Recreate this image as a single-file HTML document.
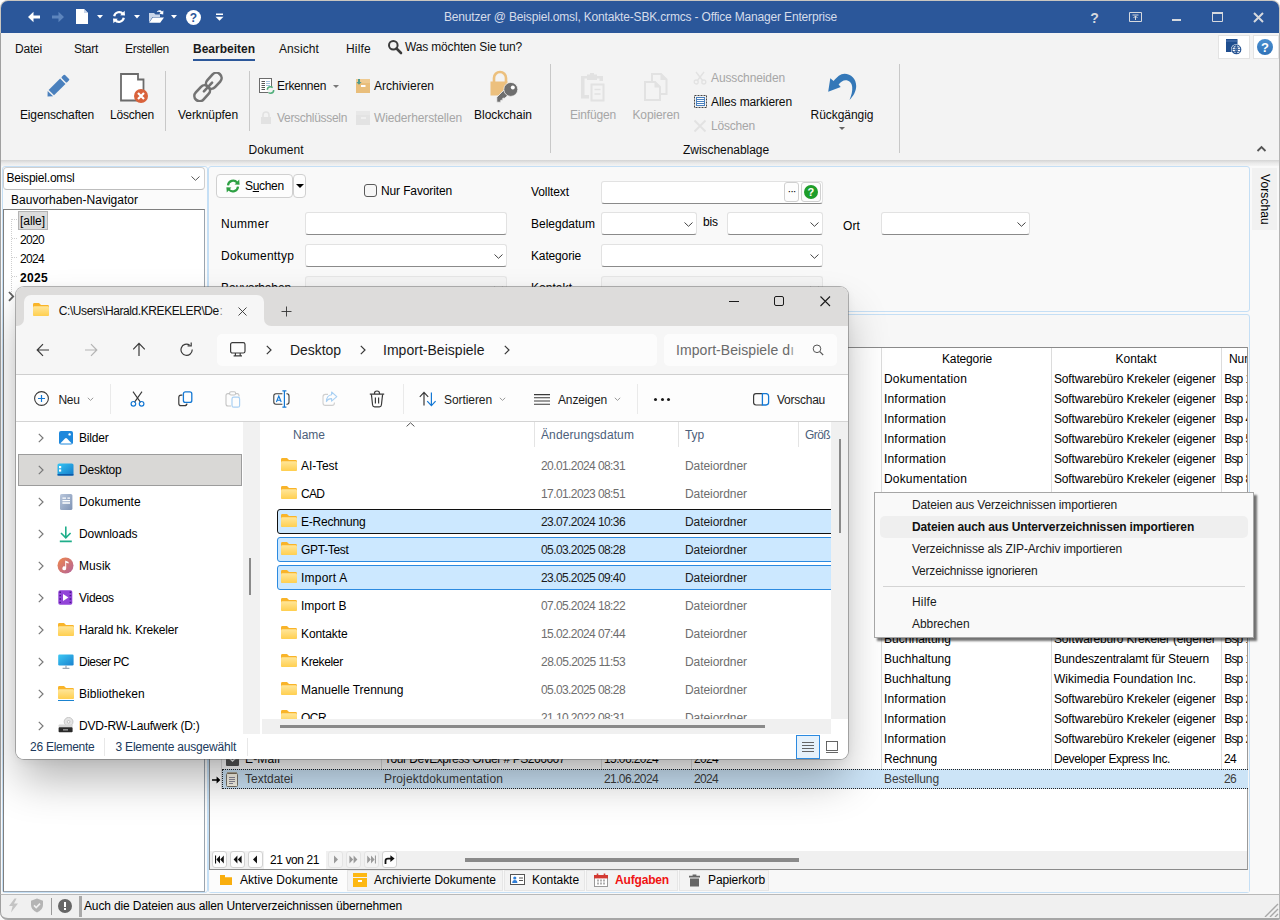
<!DOCTYPE html>
<html lang="de"><head><meta charset="utf-8"><title>Office Manager Enterprise</title>
<style>
html,body{margin:0;padding:0;}
body{width:1280px;height:920px;overflow:hidden;position:relative;background:#f9f9f9;font-family:"Liberation Sans",sans-serif;font-size:12px;color:#000;}
div,span,svg{position:absolute;box-sizing:border-box;}
.t{white-space:nowrap;display:block;}
.g{color:#a6a6a6;}

</style></head><body>
<div style="left:0px;top:0px;width:1280px;height:920px;background:#f9f9f9;border-radius:8px 8px 2px 8px;"></div>
<div style="left:0px;top:0px;width:1280px;height:34px;background:#fff;"></div>
<div style="left:0px;top:0px;width:1280px;height:34px;background:#c9c6c0;border-radius:8px 8px 0 0;"></div>
<div style="left:1px;top:1px;width:1278px;height:32px;background:#2b579a;border-radius:7px 7px 0 0;"></div>
<svg style="left:26px;top:9px;" width="16" height="16" viewBox="0 0 16 16"><path d="M2 8 L7.5 2.8 V6.6 H14 V9.4 H7.5 V13.2 Z" fill="#ffffff"/></svg>
<svg style="left:50px;top:9px;" width="16" height="16" viewBox="0 0 16 16"><path d="M14 8 L8.5 2.8 V6.6 H2 V9.4 H8.5 V13.2 Z" fill="#5d85bd"/></svg>
<svg style="left:75px;top:8px;" width="14" height="17" viewBox="0 0 14 17"><path d="M1 1 H9 L13 5 V16 H1 Z" fill="#ffffff"/><path d="M9 1 V5 H13 Z" fill="#c9d6ea"/></svg>
<svg style="left:96.5px;top:15px;" width="6" height="4" viewBox="0 0 6 4"><path d="M0 0 H6 L3 3.4 Z" fill="#ffffff"/></svg>
<svg style="left:133.5px;top:15px;" width="6" height="4" viewBox="0 0 6 4"><path d="M0 0 H6 L3 3.4 Z" fill="#ffffff"/></svg>
<svg style="left:170.5px;top:15px;" width="6" height="4" viewBox="0 0 6 4"><path d="M0 0 H6 L3 3.4 Z" fill="#ffffff"/></svg>
<svg style="left:112px;top:10px;" width="14" height="14" viewBox="0 0 14 14"><path d="M2.2 6.2 A5 5 0 0 1 11 4" fill="none" stroke="#ffffff" stroke-width="2.2"/><path d="M8.2 5.2 L13 5.6 L12.6 0.8 Z" fill="#ffffff"/><path d="M11.8 7.8 A5 5 0 0 1 3 10" fill="none" stroke="#ffffff" stroke-width="2.2"/><path d="M5.8 8.8 L1 8.4 L1.4 13.2 Z" fill="#ffffff"/></svg>
<svg style="left:148px;top:8px;" width="17" height="16" viewBox="0 0 17 16"><path d="M1 5 H6 L7.5 6.5 H12 V9 H4.5 L1 14.5 Z" fill="#c9d6ea"/><path d="M4.8 9.6 H16 L12.2 14.8 H1.2 Z" fill="#ffffff"/><path d="M9 3.4 C11 1.6 13 2 14 3.6 L15.4 2.6 L15.2 6.6 L11.4 5.8 L12.6 4.8 C11.8 3.6 10.6 3.4 9.6 4.2 Z" fill="#ffffff"/></svg>
<div style="left:186px;top:10px;width:15px;height:15px;background:#ffffff;border-radius:50%;"></div>
<span class="t" style="left:189.8px;top:9.5px;line-height:16px;letter-spacing:0px;font-weight:bold;color:#2b579a;">?</span>
<svg style="left:215px;top:13px;" width="9" height="8" viewBox="0 0 9 8"><path d="M1 0.5 H8 V2 H1 Z M0.5 3.8 H8.5 L4.5 7.8 Z" fill="#ffffff"/></svg>
<span class="t" style="left:444.0px;top:9.0px;line-height:16px;letter-spacing:-0.172px;color:#d5dcea;">Benutzer @ Beispiel.omsl, Kontakte-SBK.crmcs - Office Manager Enterprise</span>
<span class="t" style="left:1090.2px;top:8.5px;line-height:18px;letter-spacing:0px;font-size:14px;font-weight:bold;color:#d6d9de;">?</span>
<svg style="left:1129px;top:12px;" width="13" height="10" viewBox="0 0 13 10"><path d="M0.5 0.5 H12.5 V9.5 H0.5 Z" fill="none" stroke="#d6d9de" stroke-width="1"/><path d="M3.5 3 H9.5 M6.5 8 V4 M4.5 6 L6.5 4 L8.5 6" fill="none" stroke="#d6d9de" stroke-width="1"/></svg>
<div style="left:1172px;top:19px;width:9px;height:2px;background:#d6d9de;"></div>
<svg style="left:1212px;top:12px;" width="11" height="10" viewBox="0 0 11 10"><path d="M0.5 1 H10.5 V9.5 H0.5 Z" fill="none" stroke="#d6d9de" stroke-width="1"/><path d="M0 0 H11 V2 H0 Z" fill="#d6d9de"/></svg>
<svg style="left:1253px;top:12px;" width="11" height="11" viewBox="0 0 11 11"><path d="M1 1 L10 10 M10 1 L1 10" stroke="#d6d9de" stroke-width="2" fill="none"/></svg>
<div style="left:1px;top:33px;width:1279px;height:128px;background:#f3f3f3;"></div>
<div style="left:1px;top:160px;width:1279px;height:6px;background:linear-gradient(#d4d4d4,#e9e9e9 50%,#f4f4f4);"></div>
<div style="left:0px;top:33px;width:1px;height:879px;background:#a0a0a0;"></div>
<div style="left:1279px;top:33px;width:1px;height:879px;background:#b4b4b4;"></div>
<span class="t" style="left:15.0px;top:40.5px;line-height:16px;letter-spacing:-0.203px;color:#111;">Datei</span>
<span class="t" style="left:74.0px;top:40.5px;line-height:16px;letter-spacing:-0.266px;color:#111;">Start</span>
<span class="t" style="left:125.0px;top:40.5px;line-height:16px;letter-spacing:-0.299px;color:#111;">Erstellen</span>
<span class="t" style="left:279.0px;top:40.5px;line-height:16px;letter-spacing:0.094px;color:#111;">Ansicht</span>
<span class="t" style="left:346.0px;top:40.5px;line-height:16px;letter-spacing:0.197px;color:#111;">Hilfe</span>
<span class="t" style="left:193.0px;top:40.5px;line-height:16px;letter-spacing:-0.002px;font-weight:bold;color:#1a1a1a;">Bearbeiten</span>
<div style="left:193px;top:59px;width:62px;height:2px;background:#2b579a;"></div>
<svg style="left:387px;top:39px;" width="16" height="16" viewBox="0 0 16 16"><circle cx="6.3" cy="6.3" r="4.3" fill="none" stroke="#3b3b3b" stroke-width="2"/><path d="M9.5 9.5 L14 14" stroke="#3b3b3b" stroke-width="2.6" stroke-linecap="round"/></svg>
<span class="t" style="left:405.0px;top:38.5px;line-height:16px;letter-spacing:-0.163px;color:#111;">Was möchten Sie tun?</span>
<div style="left:1218px;top:35px;width:32px;height:24px;background:#fff;border:1px solid #e3e3e3;"></div>
<div style="left:1253px;top:35px;width:26px;height:24px;background:#fff;border:1px solid #e3e3e3;"></div>
<svg style="left:1226px;top:39px;" width="17" height="17" viewBox="0 0 17 17"><rect x="0" y="0" width="11.5" height="13" fill="#1f4e8f"/><rect x="0" y="1.6" width="11.5" height="0.8" fill="#5f86bd"/><circle cx="10.4" cy="10.4" r="5.4" fill="#fff"/><circle cx="10.4" cy="10.4" r="4.4" fill="#fff" stroke="#1f4e8f" stroke-width="1.1"/><path d="M6 10.4 H14.8 M10.4 6 V14.8 M7 8.2 H13.8 M7 12.6 H13.8 M10.4 6 Q7.6 10.4 10.4 14.8 M10.4 6 Q13.2 10.4 10.4 14.8" fill="none" stroke="#1f4e8f" stroke-width="0.8"/></svg>
<div style="left:1257px;top:39px;width:16px;height:16px;background:linear-gradient(#4a8fd0,#2f72b8);border-radius:50%;"></div>
<span class="t" style="left:1261.0px;top:39.0px;line-height:17px;letter-spacing:0px;font-size:13px;font-weight:bold;color:#fff;">?</span>
<div style="left:165px;top:71px;width:1px;height:60px;background:#c8c8c8;"></div>
<div style="left:249px;top:71px;width:1px;height:60px;background:#c8c8c8;"></div>
<div style="left:550px;top:64px;width:1px;height:89px;background:#c8c8c8;"></div>
<div style="left:899px;top:64px;width:1px;height:89px;background:#c8c8c8;"></div>
<span class="t" style="left:20.0px;top:107.0px;line-height:16px;letter-spacing:-0.156px;color:#0c0c0c;">Eigenschaften</span>
<span class="t" style="left:110.0px;top:107.0px;line-height:16px;letter-spacing:-0.194px;color:#0c0c0c;">Löschen</span>
<span class="t" style="left:178.0px;top:107.0px;line-height:16px;letter-spacing:-0.070px;color:#0c0c0c;">Verknüpfen</span>
<span class="t" style="left:474.0px;top:107.0px;line-height:16px;letter-spacing:-0.003px;color:#0c0c0c;">Blockchain</span>
<span class="t g" style="left:570.0px;top:107.0px;line-height:16px;letter-spacing:-0.170px;">Einfügen</span>
<span class="t g" style="left:632.5px;top:107.0px;line-height:16px;letter-spacing:-0.129px;">Kopieren</span>
<span class="t" style="left:810.5px;top:107.0px;line-height:16px;letter-spacing:-0.037px;color:#0c0c0c;">Rückgängig</span>
<svg style="left:839px;top:127px;" width="6" height="3" viewBox="0 0 6 3"><path d="M0 0 H6 L3 3 Z" fill="#666"/></svg>
<span class="t" style="left:248.5px;top:142.0px;line-height:16px;letter-spacing:0.039px;color:#0c0c0c;">Dokument</span>
<span class="t" style="left:683.0px;top:142.0px;line-height:16px;letter-spacing:-0.051px;color:#0c0c0c;">Zwischenablage</span>
<span class="t" style="left:277.0px;top:78.0px;line-height:16px;letter-spacing:-0.295px;color:#0c0c0c;">Erkennen</span>
<svg style="left:333px;top:85px;" width="6" height="3" viewBox="0 0 6 3"><path d="M0 0 H6 L3 3 Z" fill="#777"/></svg>
<span class="t" style="left:374.0px;top:78.0px;line-height:16px;letter-spacing:-0.003px;color:#0c0c0c;">Archivieren</span>
<span class="t g" style="left:277.0px;top:110.0px;line-height:16px;letter-spacing:-0.311px;">Verschlüsseln</span>
<span class="t g" style="left:374.0px;top:110.0px;line-height:16px;letter-spacing:-0.128px;">Wiederherstellen</span>
<span class="t g" style="left:711.0px;top:70.0px;line-height:16px;letter-spacing:-0.115px;">Ausschneiden</span>
<span class="t" style="left:711.0px;top:94.0px;line-height:16px;letter-spacing:-0.114px;color:#0c0c0c;">Alles markieren</span>
<span class="t g" style="left:711.0px;top:118.0px;line-height:16px;letter-spacing:-0.194px;">Löschen</span>
<svg style="left:1256px;top:145px;" width="11" height="8" viewBox="0 0 11 8"><path d="M1.5 6 L5.5 2 L9.5 6" fill="none" stroke="#555" stroke-width="1.8"/></svg>
<svg style="left:44px;top:74px;" width="26" height="26" viewBox="0 0 26 26"><g transform="rotate(45 13 13)"><rect x="9.2" y="-1.2" width="7.6" height="4.6" rx="1" fill="#4a80bd"/><rect x="9.2" y="4.8" width="7.6" height="16.2" fill="#4a80bd"/><path d="M9.2 22.4 H16.8 L13 26.4 Z" fill="#4a80bd"/></g></svg>
<svg style="left:119px;top:72px;" width="30" height="32" viewBox="0 0 30 32"><path d="M2 2 H19 V7.5 H24.5 V28.5 H2 Z" fill="#fff" stroke="#6b6b6b" stroke-width="1.8"/><circle cx="22" cy="24" r="7" fill="#d9623b"/><path d="M19 21 L25 27 M25 21 L19 27" stroke="#fff" stroke-width="2.2"/></svg>
<svg style="left:193px;top:72px;" width="30" height="30" viewBox="0 0 30 30"><g fill="none" stroke="#737373" stroke-width="2.6" transform="rotate(-47 15 15)"><rect x="-2.5" y="9.8" width="18" height="10.4" rx="5.2"/><rect x="14.5" y="9.8" width="18" height="10.4" rx="5.2"/><path d="M9 15 H21" stroke-linecap="round"/></g></svg>
<svg style="left:258px;top:77px;" width="17" height="18" viewBox="0 0 17 18"><rect x="1.5" y="1.5" width="12" height="14" fill="#fff" stroke="#6b6b6b" stroke-width="1"/><path d="M3.5 4.5 H7 M3.5 6.5 H7 M3.5 8.5 H7 M3.5 10.5 H7 M3.5 12.5 H7" stroke="#555" stroke-width="1"/><path d="M8.5 4.5 H12 M8.5 6.5 H12 M8.5 8.5 H12" stroke="#4a80bd" stroke-width="1" stroke-dasharray="1 1"/><circle cx="12.5" cy="13" r="3.2" fill="#f3f3f3" stroke="#4fae7a" stroke-width="1.5" stroke-dasharray="7 3"/></svg>
<svg style="left:260px;top:111px;" width="12" height="14" viewBox="0 0 12 14"><path d="M3 6 V4 A3 3 0 0 1 9 4 V6" fill="none" stroke="#e2e2e2" stroke-width="1.6"/><rect x="1" y="6" width="10" height="7" fill="#e2e2e2"/></svg>
<svg style="left:356px;top:79px;" width="14" height="14" viewBox="0 0 14 14"><rect x="0" y="0" width="14" height="4" fill="#efca90"/><rect x="0" y="4" width="14" height="10" fill="#e9be7b"/><rect x="5" y="6" width="4.5" height="2" fill="#fff"/><path d="M2 0 H4 V3 H5.6 L3 5.8 L0.4 3 H2 Z" fill="#4f9a8c"/></svg>
<svg style="left:356px;top:111px;" width="14" height="14" viewBox="0 0 14 14"><rect x="0" y="0" width="14" height="4" fill="#e8e8e8"/><rect x="0" y="4" width="14" height="10" fill="#e3e3e3"/><rect x="5" y="6" width="4.5" height="2" fill="#fff"/></svg>
<div style="left:361px;top:117px;width:4.5px;height:2px;background:#efefef;"></div>
<svg style="left:488px;top:69px;" width="32" height="36" viewBox="0 0 32 36"><path d="M6 13 V9 A6 6 0 0 1 18 9 V13" fill="none" stroke="#ecc07e" stroke-width="2.6"/><rect x="2.5" y="12.5" width="17" height="14" fill="#ecc07e"/><path d="M18 19 L8.8 28.2 V33.2 H12.8 V31.2 H14.8 V29.2 H16.8 L20.8 25.6 Z" fill="#6e6e6e" stroke="#f3f3f3" stroke-width="0.8"/><circle cx="22.8" cy="20.4" r="7" fill="#6e6e6e" stroke="#f3f3f3" stroke-width="0.8"/><circle cx="24.8" cy="18.4" r="2" fill="#fff"/></svg>
<svg style="left:580px;top:72px;" width="26" height="30" viewBox="0 0 26 30"><path d="M1 4 H7 V2.5 H10 V1 H14 V2.5 H17 V4 H23 V9 H19.5 V6.5 H17 V8 H7 V6.5 H4.5 V23 H9 V26.5 H1 Z" fill="#e2e2e2"/><path d="M11.5 12.5 H23.5 V28.5 H11.5 Z" fill="none" stroke="#e2e2e2" stroke-width="2"/><path d="M14.5 17.5 H20.5 M14.5 22 H20.5" stroke="#e2e2e2" stroke-width="1.6"/></svg>
<svg style="left:643px;top:72px;" width="26" height="30" viewBox="0 0 26 30"><path d="M9 10 V2 H18 L23.5 7.5 V22 H18" fill="none" stroke="#e2e2e2" stroke-width="2"/><path d="M17.5 2 V8 H23.5 Z" fill="#e2e2e2"/><path d="M2 10 H12 L17 15 V28 H2 Z" fill="none" stroke="#e2e2e2" stroke-width="2"/><path d="M11.5 10 V15.5 H17 Z" fill="#e2e2e2"/></svg>
<svg style="left:693px;top:71px;" width="14" height="14" viewBox="0 0 14 14"><path d="M3 1 L10 10 M11 1 L4 10" stroke="#e2e2e2" stroke-width="1.4" fill="none"/><circle cx="3.2" cy="11" r="2" fill="none" stroke="#e2e2e2" stroke-width="1.3"/><circle cx="10.8" cy="11" r="2" fill="none" stroke="#e2e2e2" stroke-width="1.3"/></svg>
<svg style="left:693px;top:94px;" width="15" height="15" viewBox="0 0 15 15"><rect x="1.5" y="1.5" width="12" height="12" fill="none" stroke="#444" stroke-width="1" stroke-dasharray="2 1"/><rect x="3.5" y="3.5" width="8" height="8" fill="#fff" stroke="#4a80bd" stroke-width="1"/><path d="M4 5.5 H11 M4 7.5 H11 M4 9.5 H11" stroke="#4a80bd" stroke-width="1"/></svg>
<svg style="left:693px;top:119px;" width="14" height="14" viewBox="0 0 14 14"><path d="M1.5 1.5 L12.5 12.5 M12.5 1.5 L1.5 12.5" stroke="#e2e2e2" stroke-width="1.8" fill="none"/></svg>
<svg style="left:826px;top:72px;" width="32" height="30" viewBox="0 0 32 30"><path d="M2.2 19.8 L4.3 6.3 L7.6 9 C11 5 14.5 1.8 18.5 1.8 C25 1.8 30.2 7 30.2 14 C30.2 19 27.5 24 23.5 28 C25.5 23 26.6 19 26.2 15 C25.8 10.5 23 8.2 19.5 8.2 C17 8.2 14.8 10 12.6 12.4 L14.7 14.9 Z" fill="#3478b8"/></svg>
<div style="left:2px;top:166px;width:206px;height:727px;border:1px solid #c5dff5;border-radius:3px;background:#fbfbfb;"></div>
<div style="left:208px;top:166px;width:1042px;height:146px;border:1px solid #c5dff5;border-radius:3px;background:#f9f9f9;"></div>
<div style="left:208px;top:314px;width:1042px;height:579px;border:1px solid #c5dff5;border-radius:3px;background:#f7f7f7;"></div>
<div style="left:3px;top:167px;width:202px;height:23px;background:#fff;border:1px solid #cfcfcf;border-bottom-color:#bdbdbd;border-radius:4px;"></div>
<span class="t" style="left:6.4px;top:170.0px;line-height:16px;letter-spacing:-0.208px;">Beispiel.omsl</span>
<svg style="left:191px;top:176px;" width="9" height="5" viewBox="0 0 9 5"><path d="M0.5 0.5 L4.5 4.3 L8.5 0.5" fill="none" stroke="#555" stroke-width="1.0"/></svg>
<span class="t" style="left:11.0px;top:192.0px;line-height:16px;letter-spacing:0.013px;">Bauvorhaben-Navigator</span>
<div style="left:3px;top:209px;width:202px;height:683px;background:#fff;border:1px solid #7f7f7f;border-right-color:#9aa4ae;border-bottom-color:#9aa4ae;"></div>
<div style="left:11px;top:219px;width:1px;height:75px;border-left:1px dotted #cfcfcf;"></div>
<div style="left:12px;top:219px;width:5px;height:1px;border-top:1px dotted #cfcfcf;"></div>
<div style="left:12px;top:238px;width:5px;height:1px;border-top:1px dotted #cfcfcf;"></div>
<div style="left:12px;top:257px;width:5px;height:1px;border-top:1px dotted #cfcfcf;"></div>
<div style="left:12px;top:276px;width:5px;height:1px;border-top:1px dotted #cfcfcf;"></div>
<div style="left:18px;top:211px;width:30px;height:19px;background:#dcdcdc;border:1px solid #b4b4b4;"></div>
<span class="t" style="left:20.0px;top:212.6px;line-height:16px;letter-spacing:-0.057px;">[alle]</span>
<span class="t" style="left:20.0px;top:232.0px;line-height:16px;letter-spacing:-0.672px;">2020</span>
<span class="t" style="left:20.0px;top:251.0px;line-height:16px;letter-spacing:-0.672px;">2024</span>
<span class="t" style="left:20.0px;top:270.0px;line-height:16px;letter-spacing:0.328px;font-weight:bold;">2025</span>
<div style="left:216px;top:174px;width:77px;height:24px;background:#fdfdfd;border:1px solid #d0d0d0;border-radius:4px;"></div>
<div style="left:293px;top:174px;width:13px;height:24px;background:#fdfdfd;border:1px solid #d0d0d0;border-radius:4px;"></div>
<svg style="left:226px;top:179px;" width="14" height="14" viewBox="0 0 14 14"><path d="M2 6.4 A5.2 5.2 0 0 1 11.2 3.6" fill="none" stroke="#2ea043" stroke-width="2.2"/><path d="M8.6 5.4 L13.6 5.8 L13.2 0.6 Z" fill="#2ea043"/><path d="M12 7.6 A5.2 5.2 0 0 1 2.8 10.4" fill="none" stroke="#2ea043" stroke-width="2.2"/><path d="M5.4 8.6 L0.4 8.2 L0.8 13.4 Z" fill="#2ea043"/></svg>
<span class="t" style="left:245.0px;top:178.0px;line-height:16px;letter-spacing:-0.331px;">S<u>u</u>chen</span>
<svg style="left:296px;top:184px;" width="8" height="4" viewBox="0 0 8 4"><path d="M0 0 H8 L4 4 Z" fill="#000"/></svg>
<div style="left:364px;top:184px;width:13px;height:13px;background:#f6f6f6;border:1px solid #5a5a5a;border-radius:3px;"></div>
<span class="t" style="left:381.0px;top:183.0px;line-height:16px;letter-spacing:-0.130px;">Nur Favoriten</span>
<span class="t" style="left:221.0px;top:216.0px;line-height:16px;letter-spacing:0.331px;">Nummer</span>
<div style="left:305px;top:212px;width:202px;height:23px;background:#fff;border:1px solid #e2e2e2;border-bottom:1px solid #8a8a8a;border-radius:3px;"></div>
<span class="t" style="left:221.0px;top:248.0px;line-height:16px;letter-spacing:0.210px;">Dokumenttyp</span>
<div style="left:305px;top:244px;width:202px;height:23px;background:#fff;border:1px solid #e2e2e2;border-bottom:1px solid #8a8a8a;border-radius:3px;"></div>
<svg style="left:494px;top:254px;" width="9" height="5" viewBox="0 0 9 5"><path d="M0.5 0.5 L4.5 4.3 L8.5 0.5" fill="none" stroke="#444" stroke-width="1.0"/></svg>
<span class="t" style="left:221.0px;top:280.0px;line-height:16px;letter-spacing:-0.125px;">Bauvorhaben</span>
<div style="left:305px;top:276px;width:202px;height:23px;background:#f4f4f4;border:1px solid #e6e6e6;border-bottom:1px solid #d8d8d8;border-radius:3px;"></div>
<svg style="left:494px;top:286px;" width="9" height="5" viewBox="0 0 9 5"><path d="M0.5 0.5 L4.5 4.3 L8.5 0.5" fill="none" stroke="#bbb" stroke-width="1.0"/></svg>
<span class="t" style="left:531.0px;top:184.0px;line-height:16px;letter-spacing:-0.086px;">Volltext</span>
<div style="left:601px;top:181px;width:222px;height:23px;background:#fff;border:1px solid #e2e2e2;border-bottom:1px solid #8a8a8a;border-radius:3px;"></div>
<div style="left:784px;top:182px;width:15px;height:20px;background:#fdfdfd;border:1px solid #d0d0d0;border-radius:3px;"></div>
<span class="t" style="left:787.5px;top:183.5px;line-height:15px;letter-spacing:-1px;font-size:11px;">···</span>
<div style="left:801px;top:182px;width:20px;height:20px;background:#fdfdfd;border:1px solid #d0d0d0;border-radius:3px;"></div>
<div style="left:804px;top:185px;width:14px;height:14px;background:#1e9e2a;border-radius:50%;"></div>
<span class="t" style="left:807.6px;top:185.0px;line-height:15px;letter-spacing:0px;font-size:11px;font-weight:bold;color:#fff;">?</span>
<span class="t" style="left:531.0px;top:216.0px;line-height:16px;letter-spacing:-0.003px;">Belegdatum</span>
<div style="left:601px;top:212px;width:96px;height:23px;background:#fff;border:1px solid #e2e2e2;border-bottom:1px solid #8a8a8a;border-radius:3px;"></div>
<svg style="left:684px;top:222px;" width="9" height="5" viewBox="0 0 9 5"><path d="M0.5 0.5 L4.5 4.3 L8.5 0.5" fill="none" stroke="#444" stroke-width="1.0"/></svg>
<span class="t" style="left:703.0px;top:214.0px;line-height:16px;letter-spacing:-0.115px;">bis</span>
<div style="left:727px;top:212px;width:96px;height:23px;background:#fff;border:1px solid #e2e2e2;border-bottom:1px solid #8a8a8a;border-radius:3px;"></div>
<svg style="left:810px;top:222px;" width="9" height="5" viewBox="0 0 9 5"><path d="M0.5 0.5 L4.5 4.3 L8.5 0.5" fill="none" stroke="#444" stroke-width="1.0"/></svg>
<span class="t" style="left:531.0px;top:248.0px;line-height:16px;letter-spacing:-0.151px;">Kategorie</span>
<div style="left:601px;top:244px;width:222px;height:23px;background:#fff;border:1px solid #e2e2e2;border-bottom:1px solid #8a8a8a;border-radius:3px;"></div>
<svg style="left:810px;top:254px;" width="9" height="5" viewBox="0 0 9 5"><path d="M0.5 0.5 L4.5 4.3 L8.5 0.5" fill="none" stroke="#444" stroke-width="1.0"/></svg>
<span class="t" style="left:531.0px;top:280.0px;line-height:16px;letter-spacing:0.047px;">Kontakt</span>
<div style="left:601px;top:276px;width:222px;height:23px;background:#f4f4f4;border:1px solid #e6e6e6;border-bottom:1px solid #d8d8d8;border-radius:3px;"></div>
<svg style="left:810px;top:286px;" width="9" height="5" viewBox="0 0 9 5"><path d="M0.5 0.5 L4.5 4.3 L8.5 0.5" fill="none" stroke="#bbb" stroke-width="1.0"/></svg>
<span class="t" style="left:843.0px;top:218.0px;line-height:16px;letter-spacing:0.115px;">Ort</span>
<div style="left:881px;top:212px;width:149px;height:23px;background:#fff;border:1px solid #e2e2e2;border-bottom:1px solid #8a8a8a;border-radius:3px;"></div>
<svg style="left:1017px;top:222px;" width="9" height="5" viewBox="0 0 9 5"><path d="M0.5 0.5 L4.5 4.3 L8.5 0.5" fill="none" stroke="#444" stroke-width="1.0"/></svg>
<div style="left:1252px;top:168px;width:25px;height:62px;background:#f1f1f1;"></div>
<span class="t" style="left:1257px;top:174px;writing-mode:vertical-rl;line-height:16px;letter-spacing:0.1px;">Vorschau</span>
<svg style="left:8px;top:291px;" width="7" height="11" viewBox="0 0 7 11"><path d="M1 1 L5.2 5.4 L1 9.8" fill="none" stroke="#606060" stroke-width="1.8"/></svg>
<div style="left:209px;top:347px;width:1039px;height:523px;background:#fff;border:1px solid #8a8a8a;border-right-color:#9a9a9a;"></div>
<div style="left:221px;top:348px;width:1px;height:441px;background:#dcdcdc;"></div>
<div style="left:381px;top:348px;width:1px;height:441px;background:#dcdcdc;"></div>
<div style="left:601px;top:348px;width:1px;height:441px;background:#dcdcdc;"></div>
<div style="left:691px;top:348px;width:1px;height:441px;background:#dcdcdc;"></div>
<div style="left:881px;top:348px;width:1px;height:441px;background:#dcdcdc;"></div>
<div style="left:1051px;top:348px;width:1px;height:441px;background:#dcdcdc;"></div>
<div style="left:1221px;top:348px;width:1px;height:441px;background:#dcdcdc;"></div>
<span class="t" style="left:942.0px;top:351.0px;line-height:16px;letter-spacing:-0.151px;">Kategorie</span>
<span class="t" style="left:1115.5px;top:351.0px;line-height:16px;letter-spacing:0.047px;">Kontakt</span>
<div style="left:1222px;top:348px;width:25px;height:20px;overflow:hidden;"><span class="t" style="left:7px;top:3px;line-height:16px;letter-spacing:-0.1px;">Nummer</span></div>
<div style="left:222px;top:769px;width:1026px;height:20px;background:#cce4f7;"></div>
<div style="left:223px;top:769px;width:1025px;height:1px;border-top:1px dotted #222;"></div>
<div style="left:223px;top:788px;width:1025px;height:1px;border-top:1px dotted #222;"></div>
<div style="left:222px;top:769px;width:1px;height:20px;border-left:1px dotted #222;"></div>
<span class="t" style="left:884.0px;top:371.0px;line-height:16px;letter-spacing:0.177px;color:#000;">Dokumentation</span>
<span class="t" style="left:1054.0px;top:371.0px;line-height:16px;letter-spacing:-0.174px;color:#000;">Softwarebüro Krekeler (eigener</span>
<span class="t" style="left:1224.3px;top:371.0px;line-height:16px;letter-spacing:-0.891px;">Bsp</span>
<div style="left:1240px;top:369px;width:7px;height:20px;overflow:hidden;"><span class="t" style="left:5.6px;top:2px;line-height:16px;">1</span></div>
<span class="t" style="left:884.0px;top:391.0px;line-height:16px;letter-spacing:0.180px;color:#000;">Information</span>
<span class="t" style="left:1054.0px;top:391.0px;line-height:16px;letter-spacing:-0.174px;color:#000;">Softwarebüro Krekeler (eigener</span>
<span class="t" style="left:1224.3px;top:391.0px;line-height:16px;letter-spacing:-0.891px;">Bsp</span>
<div style="left:1240px;top:389px;width:7px;height:20px;overflow:hidden;"><span class="t" style="left:5.6px;top:2px;line-height:16px;">2</span></div>
<span class="t" style="left:884.0px;top:411.0px;line-height:16px;letter-spacing:0.180px;color:#000;">Information</span>
<span class="t" style="left:1054.0px;top:411.0px;line-height:16px;letter-spacing:-0.174px;color:#000;">Softwarebüro Krekeler (eigener</span>
<span class="t" style="left:1224.3px;top:411.0px;line-height:16px;letter-spacing:-0.891px;">Bsp</span>
<div style="left:1240px;top:409px;width:7px;height:20px;overflow:hidden;"><span class="t" style="left:5.6px;top:2px;line-height:16px;">4</span></div>
<span class="t" style="left:884.0px;top:431.0px;line-height:16px;letter-spacing:0.180px;color:#000;">Information</span>
<span class="t" style="left:1054.0px;top:431.0px;line-height:16px;letter-spacing:-0.174px;color:#000;">Softwarebüro Krekeler (eigener</span>
<span class="t" style="left:1224.3px;top:431.0px;line-height:16px;letter-spacing:-0.891px;">Bsp</span>
<div style="left:1240px;top:429px;width:7px;height:20px;overflow:hidden;"><span class="t" style="left:5.6px;top:2px;line-height:16px;">5</span></div>
<span class="t" style="left:884.0px;top:451.0px;line-height:16px;letter-spacing:0.180px;color:#000;">Information</span>
<span class="t" style="left:1054.0px;top:451.0px;line-height:16px;letter-spacing:-0.174px;color:#000;">Softwarebüro Krekeler (eigener</span>
<span class="t" style="left:1224.3px;top:451.0px;line-height:16px;letter-spacing:-0.891px;">Bsp</span>
<div style="left:1240px;top:449px;width:7px;height:20px;overflow:hidden;"><span class="t" style="left:5.6px;top:2px;line-height:16px;">7</span></div>
<span class="t" style="left:884.0px;top:471.0px;line-height:16px;letter-spacing:0.177px;color:#000;">Dokumentation</span>
<span class="t" style="left:1054.0px;top:471.0px;line-height:16px;letter-spacing:-0.174px;color:#000;">Softwarebüro Krekeler (eigener</span>
<span class="t" style="left:1224.3px;top:471.0px;line-height:16px;letter-spacing:-0.891px;">Bsp</span>
<div style="left:1240px;top:469px;width:7px;height:20px;overflow:hidden;"><span class="t" style="left:5.6px;top:2px;line-height:16px;">8</span></div>
<span class="t" style="left:884.0px;top:631.0px;line-height:16px;letter-spacing:0.027px;color:#000;">Buchhaltung</span>
<span class="t" style="left:1054.0px;top:631.0px;line-height:16px;letter-spacing:-0.174px;color:#000;">Softwarebüro Krekeler (eigener</span>
<span class="t" style="left:1224.3px;top:631.0px;line-height:16px;letter-spacing:-0.891px;">Bsp</span>
<div style="left:1240px;top:629px;width:7px;height:20px;overflow:hidden;"><span class="t" style="left:5.6px;top:2px;line-height:16px;">1</span></div>
<span class="t" style="left:884.0px;top:651.0px;line-height:16px;letter-spacing:0.027px;color:#000;">Buchhaltung</span>
<span class="t" style="left:1054.0px;top:651.0px;line-height:16px;letter-spacing:-0.156px;color:#000;">Bundeszentralamt für Steuern</span>
<span class="t" style="left:1224.3px;top:651.0px;line-height:16px;letter-spacing:-0.891px;">Bsp</span>
<div style="left:1240px;top:649px;width:7px;height:20px;overflow:hidden;"><span class="t" style="left:5.6px;top:2px;line-height:16px;">1</span></div>
<span class="t" style="left:884.0px;top:671.0px;line-height:16px;letter-spacing:0.027px;color:#000;">Buchhaltung</span>
<span class="t" style="left:1054.0px;top:671.0px;line-height:16px;letter-spacing:0.025px;color:#000;">Wikimedia Foundation Inc.</span>
<span class="t" style="left:1224.3px;top:671.0px;line-height:16px;letter-spacing:-0.891px;">Bsp</span>
<div style="left:1240px;top:669px;width:7px;height:20px;overflow:hidden;"><span class="t" style="left:5.6px;top:2px;line-height:16px;">2</span></div>
<span class="t" style="left:884.0px;top:691.0px;line-height:16px;letter-spacing:0.180px;color:#000;">Information</span>
<span class="t" style="left:1054.0px;top:691.0px;line-height:16px;letter-spacing:-0.174px;color:#000;">Softwarebüro Krekeler (eigener</span>
<span class="t" style="left:1224.3px;top:691.0px;line-height:16px;letter-spacing:-0.891px;">Bsp</span>
<div style="left:1240px;top:689px;width:7px;height:20px;overflow:hidden;"><span class="t" style="left:5.6px;top:2px;line-height:16px;">2</span></div>
<span class="t" style="left:884.0px;top:711.0px;line-height:16px;letter-spacing:0.180px;color:#000;">Information</span>
<span class="t" style="left:1054.0px;top:711.0px;line-height:16px;letter-spacing:-0.174px;color:#000;">Softwarebüro Krekeler (eigener</span>
<span class="t" style="left:1224.3px;top:711.0px;line-height:16px;letter-spacing:-0.891px;">Bsp</span>
<div style="left:1240px;top:709px;width:7px;height:20px;overflow:hidden;"><span class="t" style="left:5.6px;top:2px;line-height:16px;">2</span></div>
<span class="t" style="left:884.0px;top:731.0px;line-height:16px;letter-spacing:0.180px;color:#000;">Information</span>
<span class="t" style="left:1054.0px;top:731.0px;line-height:16px;letter-spacing:-0.174px;color:#000;">Softwarebüro Krekeler (eigener</span>
<span class="t" style="left:1224.3px;top:731.0px;line-height:16px;letter-spacing:-0.891px;">Bsp</span>
<div style="left:1240px;top:729px;width:7px;height:20px;overflow:hidden;"><span class="t" style="left:5.6px;top:2px;line-height:16px;">2</span></div>
<span class="t" style="left:884.0px;top:751.0px;line-height:16px;letter-spacing:-0.213px;color:#000;">Rechnung</span>
<span class="t" style="left:1054.0px;top:751.0px;line-height:16px;letter-spacing:-0.365px;color:#000;">Developer Express Inc.</span>
<span class="t" style="left:1224.0px;top:751.0px;line-height:16px;letter-spacing:-0.672px;color:#000;">24</span>
<span class="t" style="left:884.0px;top:771.0px;line-height:16px;letter-spacing:-0.103px;color:#3c3c3c;">Bestellung</span>
<span class="t" style="left:1224.0px;top:771.0px;line-height:16px;letter-spacing:-0.672px;color:#3c3c3c;">26</span>
<svg style="left:226px;top:753px;" width="14" height="14" viewBox="0 0 14 14"><rect x="0" y="1" width="13" height="12" rx="1" fill="#555"/><path d="M1 3 L6.5 8 L12 3" fill="none" stroke="#fff" stroke-width="1.4"/></svg>
<span class="t" style="left:245.0px;top:751.0px;line-height:16px;letter-spacing:0.164px;">E-Mail</span>
<span class="t" style="left:384.0px;top:751.0px;line-height:16px;letter-spacing:-0.457px;">Your DevExpress Order # PS266667</span>
<span class="t" style="left:604.0px;top:751.0px;line-height:16px;letter-spacing:-0.603px;">15.06.2024</span>
<span class="t" style="left:694.0px;top:751.0px;line-height:16px;letter-spacing:-0.672px;">2024</span>
<svg style="left:212px;top:776px;" width="9" height="8" viewBox="0 0 9 8"><path d="M0 3.2 H5 V4.8 H0 Z M4.6 0.6 L8.4 4 L4.6 7.4 Z" fill="#000"/></svg>
<svg style="left:225px;top:771px;" width="14" height="16" viewBox="0 0 14 16"><rect x="1.5" y="2.5" width="11" height="13" rx="1" fill="#fbf7ea" stroke="#7a7468" stroke-width="1"/><path d="M3 2.5 V1 M5 2.5 V1 M7 2.5 V1 M9 2.5 V1 M11 2.5 V1" stroke="#8b6b3a" stroke-width="1"/><path d="M4 6.5 H10 M4 8.5 H10 M4 10.5 H10 M4 12.5 H8" stroke="#8a8a9a" stroke-width="1"/></svg>
<span class="t" style="left:245.0px;top:771.0px;line-height:16px;letter-spacing:-0.002px;color:#3c3c3c;">Textdatei</span>
<span class="t" style="left:384.0px;top:771.0px;line-height:16px;letter-spacing:0.148px;color:#3c3c3c;">Projektdokumentation</span>
<span class="t" style="left:604.0px;top:771.0px;line-height:16px;letter-spacing:-0.603px;color:#3c3c3c;">21.06.2024</span>
<span class="t" style="left:694.0px;top:771.0px;line-height:16px;letter-spacing:-0.672px;color:#3c3c3c;">2024</span>
<div style="left:210px;top:851px;width:1037px;height:18px;background:#f0f0f0;"></div>
<div style="left:264px;top:851px;width:62px;height:18px;background:#fff;"></div>
<div style="left:212px;top:851px;width:15px;height:17px;background:#fdfdfd;border:1px solid #d2d2d2;border-radius:3px;"></div>
<svg style="left:215px;top:855px;" width="9" height="9" viewBox="0 0 9 9"><path d="M0.5 0.5 V8.5" stroke="#111" stroke-width="1.2"/><path d="M5 0.5 V8.5 L1.4 4.5 Z M8.8 0.5 V8.5 L5.2 4.5 Z" fill="#111"/></svg>
<div style="left:230px;top:851px;width:15px;height:17px;background:#fdfdfd;border:1px solid #d2d2d2;border-radius:3px;"></div>
<svg style="left:233px;top:855px;" width="9" height="9" viewBox="0 0 9 9"><path d="M4.4 0.5 V8.5 L0.6 4.5 Z M8.6 0.5 V8.5 L4.8 4.5 Z" fill="#111"/></svg>
<div style="left:248px;top:851px;width:15px;height:17px;background:#fdfdfd;border:1px solid #d2d2d2;border-radius:3px;"></div>
<svg style="left:252px;top:855px;" width="6" height="9" viewBox="0 0 6 9"><path d="M5 0.5 V8.5 L1 4.5 Z" fill="#111"/></svg>
<span class="t" style="left:270.0px;top:851.5px;line-height:16px;letter-spacing:-0.410px;">21 von 21</span>
<div style="left:328px;top:851px;width:15px;height:17px;background:#f4f4f4;border:1px solid #e4e4e4;border-radius:3px;"></div>
<svg style="left:333px;top:855px;" width="6" height="9" viewBox="0 0 6 9"><path d="M1 0.5 V8.5 L5 4.5 Z" fill="#9a9a9a"/></svg>
<div style="left:346px;top:851px;width:15px;height:17px;background:#f4f4f4;border:1px solid #e4e4e4;border-radius:3px;"></div>
<svg style="left:349px;top:855px;" width="9" height="9" viewBox="0 0 9 9"><path d="M0.4 0.5 V8.5 L4.2 4.5 Z M4.6 0.5 V8.5 L8.4 4.5 Z" fill="#9a9a9a"/></svg>
<div style="left:364px;top:851px;width:15px;height:17px;background:#f4f4f4;border:1px solid #e4e4e4;border-radius:3px;"></div>
<svg style="left:367px;top:855px;" width="9" height="9" viewBox="0 0 9 9"><path d="M8.5 0.5 V8.5" stroke="#9a9a9a" stroke-width="1.2"/><path d="M0.2 0.5 V8.5 L3.8 4.5 Z M4 0.5 V8.5 L7.6 4.5 Z" fill="#9a9a9a"/></svg>
<div style="left:382px;top:851px;width:15px;height:17px;background:#fdfdfd;border:1px solid #d2d2d2;border-radius:3px;"></div>
<svg style="left:384px;top:854px;" width="11" height="11" viewBox="0 0 11 11"><path d="M1.5 10 V6.8 Q1.5 4.6 4 4.6 H7" fill="none" stroke="#111" stroke-width="1.8"/><path d="M6.4 1.2 L10.6 4.6 L6.4 8 Z" fill="#111"/></svg>
<div style="left:465px;top:858px;width:334px;height:4px;background:#8a8a8a;"></div>
<div style="left:209px;top:870px;width:1040px;height:22px;background:#f8f8f8;"></div>
<div style="left:210px;top:870px;width:137px;height:22px;background:#fcfcfc;"></div>
<div style="left:347px;top:870px;width:156px;height:21px;background:#f3f3f3;border:1px solid #e6e6e6;"></div>
<div style="left:504px;top:870px;width:81px;height:21px;background:#f3f3f3;border:1px solid #e6e6e6;"></div>
<div style="left:586px;top:870px;width:92px;height:21px;background:#f3f3f3;border:1px solid #e6e6e6;"></div>
<div style="left:679px;top:870px;width:90px;height:21px;background:#f3f3f3;border:1px solid #e6e6e6;"></div>
<svg style="left:220px;top:875px;" width="12" height="10" viewBox="0 0 12 10"><path d="M0 0 H5 V2.2 H12 V10 H0 Z" fill="#f9ae0e"/></svg>
<span class="t" style="left:240.0px;top:872.0px;line-height:16px;letter-spacing:0.040px;">Aktive Dokumente</span>
<svg style="left:353px;top:873px;" width="14" height="14" viewBox="0 0 14 14"><rect x="0" y="0" width="14" height="4" fill="#fdb813"/><rect x="0" y="5" width="14" height="9" fill="#fdb813"/><rect x="5" y="7" width="4" height="2" fill="#fff"/></svg>
<span class="t" style="left:374.0px;top:872.0px;line-height:16px;letter-spacing:0.030px;">Archivierte Dokumente</span>
<svg style="left:510px;top:874px;" width="16" height="12" viewBox="0 0 16 12"><rect x="0.5" y="0.5" width="14" height="10" fill="#fff" stroke="#555" stroke-width="1"/><circle cx="4.8" cy="4" r="1.6" fill="#2f7ed8"/><path d="M2.2 9 Q2.2 6 4.8 6 Q7.4 6 7.4 9 Z" fill="#2f7ed8"/><path d="M9 4 H13 M9 6.5 H13" stroke="#555" stroke-width="1"/></svg>
<span class="t" style="left:532.0px;top:872.0px;line-height:16px;letter-spacing:-0.043px;">Kontakte</span>
<svg style="left:594px;top:873px;" width="15" height="15" viewBox="0 0 15 15"><rect x="0.5" y="2.5" width="13" height="11" fill="#fff" stroke="#9a9a9a" stroke-width="1"/><rect x="0" y="2" width="14" height="3.4" fill="#d33a32"/><path d="M3.5 0.5 V3 M10.5 0.5 V3" stroke="#d33a32" stroke-width="1.6"/><path d="M3 7.5 H5 M6 7.5 H8 M9 7.5 H11 M3 10.5 H5 M6 10.5 H8 M9 10.5 H11" stroke="#b0b0b0" stroke-width="1.8"/></svg>
<span class="t" style="left:615.0px;top:872.0px;line-height:16px;letter-spacing:-0.166px;font-weight:bold;color:#f01414;">Aufgaben</span>
<svg style="left:689px;top:874px;" width="12" height="13" viewBox="0 0 12 13"><path d="M0 1.8 H3.6 V0.4 H7.4 V1.8 H11 V3.6 H0 Z M1 4.6 H10 V12.5 H1 Z" fill="#666"/></svg>
<span class="t" style="left:708.0px;top:872.0px;line-height:16px;letter-spacing:-0.103px;">Papierkorb</span>
<div id="ex" style="left:16px;top:287px;width:832px;height:472px;border-radius:8px;box-shadow:0 0 0 1px rgba(90,90,90,0.45),0 24px 44px -4px rgba(0,0,0,0.30),0 2px 10px rgba(0,0,0,0.06);background:#fff;overflow:hidden;">
<div style="left:0px;top:0px;width:832px;height:39px;background:#dddcdb;"></div>
<div style="left:0px;top:39px;width:832px;height:49px;background:#f6f6f6;border-bottom:1px solid #cfcfcf;"></div>
<div style="left:8px;top:8px;width:240px;height:31px;background:#f6f6f6;border-radius:7px 7px 0 0;"></div>
<div style="left:0px;top:31px;width:8px;height:8px;background:#f6f6f6;"></div>
<div style="left:0px;top:31px;width:8px;height:8px;background:#dddcdb;border-radius:0 0 7px 0;"></div>
<div style="left:248px;top:31px;width:8px;height:8px;background:#f6f6f6;"></div>
<div style="left:248px;top:31px;width:8px;height:8px;background:#dddcdb;border-radius:0 0 0 7px;"></div>
<svg style="left:17px;top:15.800000000000011px;" width="16" height="13" viewBox="0 0 16 13"><defs><linearGradient id="fg1" x1="0" y1="0" x2="0" y2="1"><stop offset="0" stop-color="#ffe69a"/><stop offset="1" stop-color="#ffcf4f"/></linearGradient></defs><path d="M0 1.4 Q0 0 1.4 0 H6 L8 2 H14.6 Q16 2 16 3.4 V11.6 Q16 13 14.6 13 H1.4 Q0 13 0 11.6 Z" fill="#f9b429"/><path d="M0 4.4 Q0 3.2 1.4 3.2 H14.6 Q16 3.2 16 4.4 V11.6 Q16 13 14.6 13 H1.4 Q0 13 0 11.6 Z" fill="url(#fg1)"/></svg>
<span class="t" style="left:42.8px;top:16.0px;line-height:16px;letter-spacing:-0.421px;color:#111;">C:\Users\Harald.KREKELER\De</span>
<span class="t" style="left:203.6px;top:16.0px;line-height:16px;letter-spacing:0px;color:#8a8a8a;">:</span>
<svg style="left:222px;top:20px;" width="9" height="9" viewBox="0 0 9 9"><path d="M0.5 0.5 L8.5 8.5 M8.5 0.5 L0.5 8.5" stroke="#333" stroke-width="0.9" fill="none"/></svg>
<svg style="left:265px;top:19px;" width="11" height="11" viewBox="0 0 11 11"><path d="M5.5 0.5 V10.5 M0.5 5.5 H10.5" stroke="#333" stroke-width="0.9" fill="none"/></svg>
<div style="left:713px;top:14px;width:10px;height:1px;background:#1b1b1b;"></div>
<div style="left:758px;top:9px;width:10px;height:10px;border:1px solid #1b1b1b;border-radius:2px;"></div>
<svg style="left:804px;top:9px;" width="10.5" height="10.5" viewBox="0 0 10.5 10.5"><path d="M0.5 0.5 L10.0 10.0 M10.0 0.5 L0.5 10.0" stroke="#1b1b1b" stroke-width="1.1" fill="none"/></svg>
<svg style="left:20px;top:56px;" width="14" height="14" viewBox="0 0 14 14"><path d="M13 7 H1.5 M7 1.2 L1.2 7 L7 12.8" fill="none" stroke="#3a3a3a" stroke-width="1.2"/></svg>
<svg style="left:68px;top:56px;" width="14" height="14" viewBox="0 0 14 14"><path d="M1 7 H12.5 M7 1.2 L12.8 7 L7 12.8" fill="none" stroke="#b4b4b4" stroke-width="1.2"/></svg>
<svg style="left:116px;top:55px;" width="14" height="15" viewBox="0 0 14 15"><path d="M7 14 V1.8 M1.2 7.4 L7 1.4 L12.8 7.4" fill="none" stroke="#3a3a3a" stroke-width="1.2"/></svg>
<svg style="left:164px;top:55px;" width="14" height="15" viewBox="0 0 14 15"><path d="M12.2 7.6 A5.6 5.6 0 1 1 9.6 3" fill="none" stroke="#3a3a3a" stroke-width="1.2"/><path d="M7.6 2.8 H11.2 V-0.6" fill="none" stroke="#3a3a3a" stroke-width="1.2" transform="translate(0 1)"/></svg>
<div style="left:201px;top:47px;width:440px;height:32px;background:#fcfcfc;border-radius:5px;"></div>
<div style="left:648px;top:47px;width:173px;height:32px;background:#fcfcfc;border-radius:5px;"></div>
<svg style="left:214px;top:55px;" width="16" height="15" viewBox="0 0 16 15"><rect x="0.6" y="0.6" width="14.4" height="10.4" rx="1.8" fill="none" stroke="#3a3a3a" stroke-width="1.2"/><path d="M5.4 11 V13.6 M10.2 11 V13.6 M3.6 13.8 H12" stroke="#3a3a3a" stroke-width="1.2" fill="none"/></svg>
<svg style="left:250px;top:58px;" width="6" height="10" viewBox="0 0 6 10"><path d="M0.8 0.8 L5 5 L0.8 9.2" fill="none" stroke="#3a3a3a" stroke-width="1.2"/></svg>
<svg style="left:344px;top:58px;" width="6" height="10" viewBox="0 0 6 10"><path d="M0.8 0.8 L5 5 L0.8 9.2" fill="none" stroke="#3a3a3a" stroke-width="1.2"/></svg>
<svg style="left:488px;top:58px;" width="6" height="10" viewBox="0 0 6 10"><path d="M0.8 0.8 L5 5 L0.8 9.2" fill="none" stroke="#3a3a3a" stroke-width="1.2"/></svg>
<span class="t" style="left:274.0px;top:54.0px;line-height:18px;letter-spacing:-0.049px;font-size:14px;color:#1b1b1b;">Desktop</span>
<span class="t" style="left:367.0px;top:54.0px;line-height:18px;letter-spacing:0.024px;font-size:14px;color:#1b1b1b;">Import-Beispiele</span>
<span class="t" style="left:660.0px;top:54.0px;line-height:18px;letter-spacing:0.068px;font-size:14px;color:#6a6a6a;">Import-Beispiele d</span>
<span class="t" style="left:774.3px;top:54.0px;line-height:18px;letter-spacing:0px;font-size:14px;color:#a0a0a0;">ı</span>
<svg style="left:796px;top:57px;" width="12" height="12" viewBox="0 0 12 12"><circle cx="5" cy="4.8" r="3.8" fill="none" stroke="#555" stroke-width="1"/><path d="M7.8 7.6 L11.2 11" stroke="#555" stroke-width="1.1"/></svg>
<div style="left:0px;top:88px;width:832px;height:47px;background:#fdfdfd;border-bottom:1px solid #d4d4d4;"></div>
<svg style="left:18px;top:104px;" width="16" height="16" viewBox="0 0 16 16"><circle cx="7.5" cy="7.5" r="6.9" fill="none" stroke="#3a3a3a" stroke-width="1.1"/><path d="M7.5 4 V11 M4 7.5 H11" stroke="#1478d4" stroke-width="1.2"/></svg>
<span class="t" style="left:42.5px;top:105.0px;line-height:16px;letter-spacing:-0.339px;color:#1b1b1b;">Neu</span>
<svg style="left:71px;top:110px;" width="7" height="5" viewBox="0 0 7 5"><path d="M0.8 0.8 L3.5 3.4 L6.2 0.8" fill="none" stroke="#9a9a9a" stroke-width="1"/></svg>
<div style="left:94px;top:97px;width:1px;height:30px;background:#eaeaea;"></div>
<div style="left:387px;top:97px;width:1px;height:30px;background:#eaeaea;"></div>
<div style="left:621px;top:97px;width:1px;height:30px;background:#eaeaea;"></div>
<svg style="left:114px;top:104px;" width="15" height="16" viewBox="0 0 15 16"><path d="M3 0.6 L10.6 11.4 M12 0.6 L4.4 11.4" stroke="#3a3a3a" stroke-width="1.1" fill="none"/><circle cx="3.4" cy="12.8" r="2.3" fill="none" stroke="#1478d4" stroke-width="1.2"/><circle cx="11.6" cy="12.8" r="2.3" fill="none" stroke="#1478d4" stroke-width="1.2"/></svg>
<svg style="left:162px;top:104px;" width="15" height="16" viewBox="0 0 15 16"><path d="M4.4 4.2 H3 Q0.8 4.2 0.8 6.4 V12.4 Q0.8 14.6 3 14.6 H6.6 Q8.8 14.6 9 12.6" fill="none" stroke="#3a3a3a" stroke-width="1.2"/><rect x="5.4" y="0.8" width="8.4" height="10.6" rx="2" fill="none" stroke="#1478d4" stroke-width="1.3"/></svg>
<svg style="left:209px;top:104px;" width="16" height="17" viewBox="0 0 16 17"><path d="M5 2.6 H3 Q1 2.6 1 4.6 V13 Q1 15 3 15 H6" fill="none" stroke="#c4c4c4" stroke-width="1.1"/><path d="M11 2.6 H12.4 Q14 2.6 14 4.6 V5.4" fill="none" stroke="#c4c4c4" stroke-width="1.1"/><rect x="4.6" y="0.8" width="6" height="3.2" rx="1.4" fill="none" stroke="#c4c4c4" stroke-width="1.1"/><rect x="7" y="6.2" width="7.6" height="10" rx="1.8" fill="none" stroke="#a9d0f3" stroke-width="1.2"/></svg>
<svg style="left:257px;top:103px;" width="17" height="18" viewBox="0 0 17 18"><path d="M9.4 3.8 H3 Q0.8 3.8 0.8 6 V12 Q0.8 14.2 3 14.2 H9.4 M13.4 3.8 H14 Q16 3.8 16 6 V12 Q16 14.2 14 14.2 H13.4" fill="none" stroke="#3a3a3a" stroke-width="1.1"/><path d="M11.4 1 V17 M9.4 0.8 H13.4 M9.4 17.2 H13.4" stroke="#1478d4" stroke-width="1.2" fill="none"/><path d="M3.4 12 L5.8 6 L8.2 12 M4.2 10.2 H7.4" fill="none" stroke="#1478d4" stroke-width="1.1"/></svg>
<svg style="left:306px;top:104px;" width="16" height="16" viewBox="0 0 16 16"><path d="M6 3.4 H3.4 Q1 3.4 1 5.8 V12 Q1 14.4 3.4 14.4 H10 Q12.4 14.4 12.4 12 V11.4" fill="none" stroke="#cfcfcf" stroke-width="1.1"/><path d="M9.6 1 L14.8 5.6 L9.6 10.2 V7.6 Q6 7.4 4.4 10.6 Q4.6 4.4 9.6 3.8 Z" fill="none" stroke="#a9d0f3" stroke-width="1.1" stroke-linejoin="round"/></svg>
<svg style="left:353px;top:103px;" width="16" height="18" viewBox="0 0 16 18"><path d="M0.8 4.2 H15.2 M5.4 3.8 Q5.4 1 8 1 Q10.6 1 10.6 3.8" fill="none" stroke="#3a3a3a" stroke-width="1.2"/><path d="M2.4 4.4 L3.6 15 Q3.8 16.8 5.6 16.8 H10.4 Q12.2 16.8 12.4 15 L13.6 4.4" fill="none" stroke="#3a3a3a" stroke-width="1.2"/><path d="M6.4 7.4 V13.4 M9.6 7.4 V13.4" stroke="#3a3a3a" stroke-width="1.2"/></svg>
<svg style="left:403px;top:104px;" width="18" height="16" viewBox="0 0 18 16"><path d="M5 14.6 V1.6 M0.8 5.8 L5 1.4 L9.2 5.8" fill="none" stroke="#3a3a3a" stroke-width="1.2"/><path d="M12.4 1.4 V14.4 M8.2 10.2 L12.4 14.6 L16.6 10.2" fill="none" stroke="#1478d4" stroke-width="1.2"/></svg>
<span class="t" style="left:428.0px;top:104.5px;line-height:16px;letter-spacing:-0.076px;color:#1b1b1b;">Sortieren</span>
<svg style="left:483px;top:110px;" width="7" height="5" viewBox="0 0 7 5"><path d="M0.8 0.8 L3.5 3.4 L6.2 0.8" fill="none" stroke="#9a9a9a" stroke-width="1"/></svg>
<svg style="left:518px;top:107px;" width="16" height="11" viewBox="0 0 16 11"><path d="M0 0.6 H16 M0 3.8 H16 M0 7 H16 M0 10.2 H16" stroke="#3a3a3a" stroke-width="1.1"/></svg>
<span class="t" style="left:542.0px;top:104.5px;line-height:16px;letter-spacing:-0.129px;color:#1b1b1b;">Anzeigen</span>
<svg style="left:598px;top:110px;" width="7" height="5" viewBox="0 0 7 5"><path d="M0.8 0.8 L3.5 3.4 L6.2 0.8" fill="none" stroke="#9a9a9a" stroke-width="1"/></svg>
<div style="left:638.0px;top:111px;width:3px;height:3px;background:#1b1b1b;border-radius:50%;"></div>
<div style="left:644.5px;top:111px;width:3px;height:3px;background:#1b1b1b;border-radius:50%;"></div>
<div style="left:651.0px;top:111px;width:3px;height:3px;background:#1b1b1b;border-radius:50%;"></div>
<svg style="left:737px;top:106px;" width="17" height="13" viewBox="0 0 17 13"><path d="M9.4 0.6 H3 Q0.6 0.6 0.6 3 V9.6 Q0.6 12 3 12 H9.4" fill="none" stroke="#3a3a3a" stroke-width="1.2"/><path d="M9.4 0.6 H13 Q15.6 0.6 15.6 3 V9.6 Q15.6 12 13 12 H9.4 Z" fill="none" stroke="#1478d4" stroke-width="1.3"/></svg>
<span class="t" style="left:761.0px;top:104.5px;line-height:16px;letter-spacing:-0.254px;color:#1b1b1b;">Vorschau</span>
<div style="left:0px;top:135px;width:227px;height:312px;background:#fff;"></div>
<div style="left:227px;top:135px;width:17px;height:312px;background:#f1f1f1;"></div>
<div style="left:244px;top:135px;width:2px;height:312px;background:#fff;"></div>
<div style="left:233px;top:271px;width:2px;height:37px;background:#8a8a8a;"></div>
<div style="left:2px;top:167px;width:224px;height:32px;background:#d9d8d6;border:1px solid #9c9c9c;"></div>
<svg style="left:22px;top:145.5px;" width="6" height="10" viewBox="0 0 6 10"><path d="M0.8 0.8 L5 5 L0.8 9.2" fill="none" stroke="#7a7a7a" stroke-width="1.2"/></svg>
<span class="t" style="left:63.0px;top:142.5px;line-height:16px;letter-spacing:-0.198px;color:#000;">Bilder</span>
<svg style="left:22px;top:177.5px;" width="6" height="10" viewBox="0 0 6 10"><path d="M0.8 0.8 L5 5 L0.8 9.2" fill="none" stroke="#7a7a7a" stroke-width="1.2"/></svg>
<span class="t" style="left:63.0px;top:174.5px;line-height:16px;letter-spacing:-0.217px;color:#000;">Desktop</span>
<svg style="left:22px;top:209.5px;" width="6" height="10" viewBox="0 0 6 10"><path d="M0.8 0.8 L5 5 L0.8 9.2" fill="none" stroke="#7a7a7a" stroke-width="1.2"/></svg>
<span class="t" style="left:63.0px;top:206.5px;line-height:16px;letter-spacing:0.038px;color:#000;">Dokumente</span>
<svg style="left:22px;top:241.5px;" width="6" height="10" viewBox="0 0 6 10"><path d="M0.8 0.8 L5 5 L0.8 9.2" fill="none" stroke="#7a7a7a" stroke-width="1.2"/></svg>
<span class="t" style="left:63.0px;top:238.5px;line-height:16px;letter-spacing:-0.097px;color:#000;">Downloads</span>
<svg style="left:22px;top:273.5px;" width="6" height="10" viewBox="0 0 6 10"><path d="M0.8 0.8 L5 5 L0.8 9.2" fill="none" stroke="#7a7a7a" stroke-width="1.2"/></svg>
<span class="t" style="left:63.0px;top:270.5px;line-height:16px;letter-spacing:0.071px;color:#000;">Musik</span>
<svg style="left:22px;top:305.5px;" width="6" height="10" viewBox="0 0 6 10"><path d="M0.8 0.8 L5 5 L0.8 9.2" fill="none" stroke="#7a7a7a" stroke-width="1.2"/></svg>
<span class="t" style="left:63.0px;top:302.5px;line-height:16px;letter-spacing:-0.278px;color:#000;">Videos</span>
<svg style="left:22px;top:337.5px;" width="6" height="10" viewBox="0 0 6 10"><path d="M0.8 0.8 L5 5 L0.8 9.2" fill="none" stroke="#7a7a7a" stroke-width="1.2"/></svg>
<span class="t" style="left:63.0px;top:334.5px;line-height:16px;letter-spacing:-0.195px;color:#000;">Harald hk. Krekeler</span>
<svg style="left:22px;top:369.5px;" width="6" height="10" viewBox="0 0 6 10"><path d="M0.8 0.8 L5 5 L0.8 9.2" fill="none" stroke="#7a7a7a" stroke-width="1.2"/></svg>
<span class="t" style="left:63.0px;top:366.5px;line-height:16px;letter-spacing:-0.521px;color:#000;">Dieser PC</span>
<svg style="left:22px;top:401.5px;" width="6" height="10" viewBox="0 0 6 10"><path d="M0.8 0.8 L5 5 L0.8 9.2" fill="none" stroke="#7a7a7a" stroke-width="1.2"/></svg>
<span class="t" style="left:63.0px;top:398.5px;line-height:16px;letter-spacing:0.027px;color:#000;">Bibliotheken</span>
<svg style="left:22px;top:433.5px;" width="6" height="10" viewBox="0 0 6 10"><path d="M0.8 0.8 L5 5 L0.8 9.2" fill="none" stroke="#7a7a7a" stroke-width="1.2"/></svg>
<span class="t" style="left:63.0px;top:430.5px;line-height:16px;letter-spacing:-0.221px;color:#000;">DVD-RW-Laufwerk (D:)</span>
<svg style="left:43px;top:144.0px;" width="15" height="14" viewBox="0 0 15 14"><rect x="0" y="0" width="14" height="13.6" rx="2" fill="#1e88dc"/><path d="M1.2 12.4 L6 7.4 Q7 6.4 8 7.4 L12.8 12.4 Z" fill="#fff"/><circle cx="10.6" cy="3.4" r="1.2" fill="#fff"/></svg>
<svg style="left:41px;top:175.5px;" width="17" height="14" viewBox="0 0 17 14"><defs><linearGradient id="dk" x1="0" y1="0" x2="1" y2="1"><stop offset="0" stop-color="#35c6f4"/><stop offset="1" stop-color="#1379c9"/></linearGradient></defs><rect x="0.5" y="0.5" width="16" height="12" rx="1.6" fill="url(#dk)"/><rect x="2" y="3" width="2.2" height="2.2" fill="#fff"/><rect x="2" y="6.4" width="2.2" height="2.2" fill="#fff"/><rect x="0.5" y="11" width="16" height="1.6" fill="#0d5aa7"/></svg>
<svg style="left:44px;top:206.5px;" width="13" height="16" viewBox="0 0 13 16"><defs><linearGradient id="dc" x1="0" y1="0" x2="1" y2="1"><stop offset="0" stop-color="#b9c7dc"/><stop offset="1" stop-color="#7f93b4"/></linearGradient></defs><rect x="0" y="0" width="12.4" height="16" rx="1.6" fill="url(#dc)"/><path d="M2.4 4.2 H6 M7.4 4.2 H10 M2.4 6.6 H10 M2.4 9 H10" stroke="#fff" stroke-width="1.3"/></svg>
<svg style="left:43px;top:238.5px;" width="14" height="17" viewBox="0 0 14 17"><path d="M6.8 0.6 V11.6 M2 7 L6.8 11.8 L11.6 7" fill="none" stroke="#1fae8a" stroke-width="1.6"/><path d="M0.8 15.4 H12.8" stroke="#1fae8a" stroke-width="1.6"/></svg>
<svg style="left:41px;top:270.0px;" width="17" height="17" viewBox="0 0 17 17"><defs><linearGradient id="mu" x1="0" y1="0" x2="1" y2="1"><stop offset="0" stop-color="#f0874a"/><stop offset="1" stop-color="#b3639a"/></linearGradient></defs><circle cx="8.5" cy="8.5" r="8" fill="url(#mu)"/><path d="M8.2 3.6 L11.6 5 V6.6 L9.2 5.8 V11.2 A1.9 1.9 0 1 1 8.2 9.6 Z" fill="#fff"/></svg>
<svg style="left:42px;top:303.0px;" width="15" height="15" viewBox="0 0 15 15"><rect x="0.3" y="0.3" width="14" height="14.4" rx="1.8" fill="#9244d8"/><path d="M5 4 L10.4 7.5 L5 11 Z" fill="#fff"/><path d="M1.4 2.2 H3 M1.4 5.6 H3 M1.4 9 H3 M1.4 12.4 H3 M11.6 2.2 H13.2 M11.6 5.6 H13.2 M11.6 9 H13.2 M11.6 12.4 H13.2" stroke="#4a1a8a" stroke-width="1.4"/></svg>
<svg style="left:42px;top:335.5px;" width="16" height="13" viewBox="0 0 16 13"><defs><linearGradient id="fg2" x1="0" y1="0" x2="0" y2="1"><stop offset="0" stop-color="#ffe69a"/><stop offset="1" stop-color="#ffcf4f"/></linearGradient></defs><path d="M0 1.4 Q0 0 1.4 0 H6 L8 2 H14.6 Q16 2 16 3.4 V11.6 Q16 13 14.6 13 H1.4 Q0 13 0 11.6 Z" fill="#f9b429"/><path d="M0 4.4 Q0 3.2 1.4 3.2 H14.6 Q16 3.2 16 4.4 V11.6 Q16 13 14.6 13 H1.4 Q0 13 0 11.6 Z" fill="url(#fg2)"/></svg>
<svg style="left:42px;top:366.5px;" width="16" height="16" viewBox="0 0 16 16"><defs><linearGradient id="pc" x1="0" y1="0" x2="1" y2="1"><stop offset="0" stop-color="#3cc8f4"/><stop offset="1" stop-color="#1a82cf"/></linearGradient></defs><rect x="0.2" y="0.6" width="15.4" height="10.8" rx="1.2" fill="url(#pc)"/><path d="M8 11.4 V14 M4.6 14.4 H11.4" stroke="#9aa6b4" stroke-width="1.2"/></svg>
<svg style="left:42px;top:399.0px;" width="16" height="13" viewBox="0 0 16 13"><defs><linearGradient id="fg3" x1="0" y1="0" x2="0" y2="1"><stop offset="0" stop-color="#ffe69a"/><stop offset="1" stop-color="#ffcf4f"/></linearGradient></defs><path d="M0 1.4 Q0 0 1.4 0 H6 L8 2 H14.6 Q16 2 16 3.4 V11.6 Q16 13 14.6 13 H1.4 Q0 13 0 11.6 Z" fill="#f9b429"/><path d="M0 4.4 Q0 3.2 1.4 3.2 H14.6 Q16 3.2 16 4.4 V11.6 Q16 13 14.6 13 H1.4 Q0 13 0 11.6 Z" fill="url(#fg3)"/></svg>
<div style="left:42px;top:412.5px;width:16px;height:1.4px;background:#1a82cf;"></div>
<svg style="left:42px;top:429.5px;" width="16" height="17" viewBox="0 0 16 17"><circle cx="10.6" cy="4.8" r="4.4" fill="#e4e4e4" stroke="#bdbdbd" stroke-width="0.8"/><circle cx="10.6" cy="4.8" r="1.3" fill="#fff" stroke="#aaa" stroke-width="0.6"/><rect x="0.6" y="7.4" width="14" height="3.2" rx="0.8" fill="#d8d8d8"/><rect x="0.6" y="10.2" width="14" height="5" rx="0.8" fill="#2a2a2a"/><rect x="5" y="12" width="5" height="1.6" fill="#8a8a8a"/></svg>
<div style="left:246px;top:135px;width:569px;height:297px;background:#fff;"></div>
<span class="t" style="left:277.0px;top:140.0px;line-height:16px;letter-spacing:-0.004px;color:#4c607a;">Name</span>
<svg style="left:390px;top:135px;" width="9" height="5" viewBox="0 0 9 5"><path d="M0.6 4.4 L4.5 0.8 L8.4 4.4" fill="none" stroke="#555" stroke-width="1"/></svg>
<span class="t" style="left:525.0px;top:140.0px;line-height:16px;letter-spacing:0.116px;color:#4c607a;">Änderungsdatum</span>
<span class="t" style="left:669.0px;top:140.0px;line-height:16px;letter-spacing:-0.115px;color:#4c607a;">Typ</span>
<span class="t" style="left:789.0px;top:140.0px;line-height:16px;letter-spacing:-0.582px;color:#4c607a;">Größ</span>
<div style="left:518px;top:135px;width:1px;height:25px;background:#e4e4e4;"></div>
<div style="left:662px;top:135px;width:1px;height:25px;background:#e4e4e4;"></div>
<div style="left:782px;top:135px;width:1px;height:25px;background:#e4e4e4;"></div>
<div style="left:246px;top:160px;width:569px;height:272px;overflow:hidden;">
<svg style="left:19px;top:11.0px;" width="16" height="13" viewBox="0 0 16 13"><defs><linearGradient id="fg4" x1="0" y1="0" x2="0" y2="1"><stop offset="0" stop-color="#ffe69a"/><stop offset="1" stop-color="#ffcf4f"/></linearGradient></defs><path d="M0 1.4 Q0 0 1.4 0 H6 L8 2 H14.6 Q16 2 16 3.4 V11.6 Q16 13 14.6 13 H1.4 Q0 13 0 11.6 Z" fill="#f9b429"/><path d="M0 4.4 Q0 3.2 1.4 3.2 H14.6 Q16 3.2 16 4.4 V11.6 Q16 13 14.6 13 H1.4 Q0 13 0 11.6 Z" fill="url(#fg4)"/></svg>
<span class="t" style="left:39.0px;top:10.5px;line-height:16px;letter-spacing:-0.104px;color:#000;">AI-Test</span>
<span class="t" style="left:279.0px;top:10.5px;line-height:16px;letter-spacing:-0.586px;color:#6e6e6e;">20.01.2024 08:31</span>
<span class="t" style="left:423.0px;top:10.5px;line-height:16px;letter-spacing:-0.064px;color:#6e6e6e;">Dateiordner</span>
<svg style="left:19px;top:39.0px;" width="16" height="13" viewBox="0 0 16 13"><defs><linearGradient id="fg5" x1="0" y1="0" x2="0" y2="1"><stop offset="0" stop-color="#ffe69a"/><stop offset="1" stop-color="#ffcf4f"/></linearGradient></defs><path d="M0 1.4 Q0 0 1.4 0 H6 L8 2 H14.6 Q16 2 16 3.4 V11.6 Q16 13 14.6 13 H1.4 Q0 13 0 11.6 Z" fill="#f9b429"/><path d="M0 4.4 Q0 3.2 1.4 3.2 H14.6 Q16 3.2 16 4.4 V11.6 Q16 13 14.6 13 H1.4 Q0 13 0 11.6 Z" fill="url(#fg5)"/></svg>
<span class="t" style="left:39.0px;top:38.5px;line-height:16px;letter-spacing:-0.648px;color:#000;">CAD</span>
<span class="t" style="left:279.0px;top:38.5px;line-height:16px;letter-spacing:-0.586px;color:#6e6e6e;">17.01.2023 08:51</span>
<span class="t" style="left:423.0px;top:38.5px;line-height:16px;letter-spacing:-0.064px;color:#6e6e6e;">Dateiordner</span>
<div style="left:15px;top:62.0px;width:556px;height:25px;background:#cce8ff;border:1px solid #101010;border-radius:3px 0 0 3px;"></div>
<svg style="left:19px;top:67.0px;" width="16" height="13" viewBox="0 0 16 13"><defs><linearGradient id="fg6" x1="0" y1="0" x2="0" y2="1"><stop offset="0" stop-color="#ffe69a"/><stop offset="1" stop-color="#ffcf4f"/></linearGradient></defs><path d="M0 1.4 Q0 0 1.4 0 H6 L8 2 H14.6 Q16 2 16 3.4 V11.6 Q16 13 14.6 13 H1.4 Q0 13 0 11.6 Z" fill="#f9b429"/><path d="M0 4.4 Q0 3.2 1.4 3.2 H14.6 Q16 3.2 16 4.4 V11.6 Q16 13 14.6 13 H1.4 Q0 13 0 11.6 Z" fill="url(#fg6)"/></svg>
<span class="t" style="left:39.0px;top:66.5px;line-height:16px;letter-spacing:-0.240px;color:#000;">E-Rechnung</span>
<span class="t" style="left:279.0px;top:66.5px;line-height:16px;letter-spacing:-0.586px;color:#1b1b1b;">23.07.2024 10:36</span>
<span class="t" style="left:423.0px;top:66.5px;line-height:16px;letter-spacing:-0.064px;color:#1b1b1b;">Dateiordner</span>
<div style="left:15px;top:90.0px;width:556px;height:25px;background:#cce8ff;border:1px solid #2c8ae0;border-radius:3px 0 0 3px;"></div>
<svg style="left:19px;top:95.0px;" width="16" height="13" viewBox="0 0 16 13"><defs><linearGradient id="fg7" x1="0" y1="0" x2="0" y2="1"><stop offset="0" stop-color="#ffe69a"/><stop offset="1" stop-color="#ffcf4f"/></linearGradient></defs><path d="M0 1.4 Q0 0 1.4 0 H6 L8 2 H14.6 Q16 2 16 3.4 V11.6 Q16 13 14.6 13 H1.4 Q0 13 0 11.6 Z" fill="#f9b429"/><path d="M0 4.4 Q0 3.2 1.4 3.2 H14.6 Q16 3.2 16 4.4 V11.6 Q16 13 14.6 13 H1.4 Q0 13 0 11.6 Z" fill="url(#fg7)"/></svg>
<span class="t" style="left:39.0px;top:94.5px;line-height:16px;letter-spacing:-0.325px;color:#000;">GPT-Test</span>
<span class="t" style="left:279.0px;top:94.5px;line-height:16px;letter-spacing:-0.586px;color:#1b1b1b;">05.03.2025 08:28</span>
<span class="t" style="left:423.0px;top:94.5px;line-height:16px;letter-spacing:-0.064px;color:#1b1b1b;">Dateiordner</span>
<div style="left:15px;top:118.0px;width:556px;height:25px;background:#cce8ff;border:1px solid #2c8ae0;border-radius:3px 0 0 3px;"></div>
<svg style="left:19px;top:123.0px;" width="16" height="13" viewBox="0 0 16 13"><defs><linearGradient id="fg8" x1="0" y1="0" x2="0" y2="1"><stop offset="0" stop-color="#ffe69a"/><stop offset="1" stop-color="#ffcf4f"/></linearGradient></defs><path d="M0 1.4 Q0 0 1.4 0 H6 L8 2 H14.6 Q16 2 16 3.4 V11.6 Q16 13 14.6 13 H1.4 Q0 13 0 11.6 Z" fill="#f9b429"/><path d="M0 4.4 Q0 3.2 1.4 3.2 H14.6 Q16 3.2 16 4.4 V11.6 Q16 13 14.6 13 H1.4 Q0 13 0 11.6 Z" fill="url(#fg8)"/></svg>
<span class="t" style="left:39.0px;top:122.5px;line-height:16px;letter-spacing:0.229px;color:#000;">Import A</span>
<span class="t" style="left:279.0px;top:122.5px;line-height:16px;letter-spacing:-0.586px;color:#1b1b1b;">23.05.2025 09:40</span>
<span class="t" style="left:423.0px;top:122.5px;line-height:16px;letter-spacing:-0.064px;color:#1b1b1b;">Dateiordner</span>
<svg style="left:19px;top:151.0px;" width="16" height="13" viewBox="0 0 16 13"><defs><linearGradient id="fg9" x1="0" y1="0" x2="0" y2="1"><stop offset="0" stop-color="#ffe69a"/><stop offset="1" stop-color="#ffcf4f"/></linearGradient></defs><path d="M0 1.4 Q0 0 1.4 0 H6 L8 2 H14.6 Q16 2 16 3.4 V11.6 Q16 13 14.6 13 H1.4 Q0 13 0 11.6 Z" fill="#f9b429"/><path d="M0 4.4 Q0 3.2 1.4 3.2 H14.6 Q16 3.2 16 4.4 V11.6 Q16 13 14.6 13 H1.4 Q0 13 0 11.6 Z" fill="url(#fg9)"/></svg>
<span class="t" style="left:39.0px;top:150.5px;line-height:16px;letter-spacing:0.021px;color:#000;">Import B</span>
<span class="t" style="left:279.0px;top:150.5px;line-height:16px;letter-spacing:-0.586px;color:#6e6e6e;">07.05.2024 18:22</span>
<span class="t" style="left:423.0px;top:150.5px;line-height:16px;letter-spacing:-0.064px;color:#6e6e6e;">Dateiordner</span>
<svg style="left:19px;top:179.0px;" width="16" height="13" viewBox="0 0 16 13"><defs><linearGradient id="fg10" x1="0" y1="0" x2="0" y2="1"><stop offset="0" stop-color="#ffe69a"/><stop offset="1" stop-color="#ffcf4f"/></linearGradient></defs><path d="M0 1.4 Q0 0 1.4 0 H6 L8 2 H14.6 Q16 2 16 3.4 V11.6 Q16 13 14.6 13 H1.4 Q0 13 0 11.6 Z" fill="#f9b429"/><path d="M0 4.4 Q0 3.2 1.4 3.2 H14.6 Q16 3.2 16 4.4 V11.6 Q16 13 14.6 13 H1.4 Q0 13 0 11.6 Z" fill="url(#fg10)"/></svg>
<span class="t" style="left:39.0px;top:178.5px;line-height:16px;letter-spacing:-0.105px;color:#000;">Kontakte</span>
<span class="t" style="left:279.0px;top:178.5px;line-height:16px;letter-spacing:-0.586px;color:#6e6e6e;">15.02.2024 07:44</span>
<span class="t" style="left:423.0px;top:178.5px;line-height:16px;letter-spacing:-0.064px;color:#6e6e6e;">Dateiordner</span>
<svg style="left:19px;top:207.0px;" width="16" height="13" viewBox="0 0 16 13"><defs><linearGradient id="fg11" x1="0" y1="0" x2="0" y2="1"><stop offset="0" stop-color="#ffe69a"/><stop offset="1" stop-color="#ffcf4f"/></linearGradient></defs><path d="M0 1.4 Q0 0 1.4 0 H6 L8 2 H14.6 Q16 2 16 3.4 V11.6 Q16 13 14.6 13 H1.4 Q0 13 0 11.6 Z" fill="#f9b429"/><path d="M0 4.4 Q0 3.2 1.4 3.2 H14.6 Q16 3.2 16 4.4 V11.6 Q16 13 14.6 13 H1.4 Q0 13 0 11.6 Z" fill="url(#fg11)"/></svg>
<span class="t" style="left:39.0px;top:206.5px;line-height:16px;letter-spacing:-0.361px;color:#000;">Krekeler</span>
<span class="t" style="left:279.0px;top:206.5px;line-height:16px;letter-spacing:-0.530px;color:#6e6e6e;">28.05.2025 11:53</span>
<span class="t" style="left:423.0px;top:206.5px;line-height:16px;letter-spacing:-0.064px;color:#6e6e6e;">Dateiordner</span>
<svg style="left:19px;top:235.0px;" width="16" height="13" viewBox="0 0 16 13"><defs><linearGradient id="fg12" x1="0" y1="0" x2="0" y2="1"><stop offset="0" stop-color="#ffe69a"/><stop offset="1" stop-color="#ffcf4f"/></linearGradient></defs><path d="M0 1.4 Q0 0 1.4 0 H6 L8 2 H14.6 Q16 2 16 3.4 V11.6 Q16 13 14.6 13 H1.4 Q0 13 0 11.6 Z" fill="#f9b429"/><path d="M0 4.4 Q0 3.2 1.4 3.2 H14.6 Q16 3.2 16 4.4 V11.6 Q16 13 14.6 13 H1.4 Q0 13 0 11.6 Z" fill="url(#fg12)"/></svg>
<span class="t" style="left:39.0px;top:234.5px;line-height:16px;letter-spacing:-0.020px;color:#000;">Manuelle Trennung</span>
<span class="t" style="left:279.0px;top:234.5px;line-height:16px;letter-spacing:-0.586px;color:#6e6e6e;">05.03.2025 08:28</span>
<span class="t" style="left:423.0px;top:234.5px;line-height:16px;letter-spacing:-0.064px;color:#6e6e6e;">Dateiordner</span>
<svg style="left:19px;top:263.0px;" width="16" height="13" viewBox="0 0 16 13"><defs><linearGradient id="fg13" x1="0" y1="0" x2="0" y2="1"><stop offset="0" stop-color="#ffe69a"/><stop offset="1" stop-color="#ffcf4f"/></linearGradient></defs><path d="M0 1.4 Q0 0 1.4 0 H6 L8 2 H14.6 Q16 2 16 3.4 V11.6 Q16 13 14.6 13 H1.4 Q0 13 0 11.6 Z" fill="#f9b429"/><path d="M0 4.4 Q0 3.2 1.4 3.2 H14.6 Q16 3.2 16 4.4 V11.6 Q16 13 14.6 13 H1.4 Q0 13 0 11.6 Z" fill="url(#fg13)"/></svg>
<span class="t" style="left:39.0px;top:262.5px;line-height:16px;letter-spacing:-0.557px;color:#000;">OCR</span>
<span class="t" style="left:279.0px;top:262.5px;line-height:16px;letter-spacing:-0.586px;color:#6e6e6e;">21.10.2022 08:31</span>
<span class="t" style="left:423.0px;top:262.5px;line-height:16px;letter-spacing:-0.064px;color:#6e6e6e;">Dateiordner</span>
</div>
<div style="left:815px;top:135px;width:17px;height:297px;background:#f0f0f0;"></div>
<div style="left:823px;top:152px;width:2px;height:94px;background:#8a8a8a;"></div>
<div style="left:246px;top:432px;width:569px;height:15px;background:#f0f0f0;"></div>
<div style="left:264px;top:438px;width:485px;height:3px;background:#8a8a8a;"></div>
<div style="left:815px;top:432px;width:17px;height:17px;background:#fff;"></div>
<div style="left:0px;top:447px;width:832px;height:25px;background:#fff;"></div>
<span class="t" style="left:14.0px;top:451.5px;line-height:16px;letter-spacing:-0.260px;color:#203a5c;">26 Elemente</span>
<span class="t" style="left:99.5px;top:451.5px;line-height:16px;letter-spacing:-0.201px;color:#203a5c;">3 Elemente ausgewählt</span>
<div style="left:88px;top:451px;width:1px;height:18px;background:#e8e8e8;"></div>
<div style="left:231px;top:451px;width:1px;height:18px;background:#e8e8e8;"></div>
<div style="left:780px;top:448px;width:24px;height:24px;background:#e5f1fb;border:1px solid #2c8ae0;"></div>
<svg style="left:786px;top:455px;" width="13" height="11" viewBox="0 0 13 11"><path d="M0 0.5 H12 M0 3.5 H12 M0 6.5 H12 M0 9.5 H12" stroke="#555" stroke-width="0.9"/></svg>
<svg style="left:810px;top:454px;" width="13" height="13" viewBox="0 0 13 13"><rect x="0.5" y="0.5" width="11" height="9" fill="none" stroke="#555" stroke-width="0.9"/><path d="M0 11.5 H12" stroke="#555" stroke-width="0.9"/></svg>
</div>
<div style="left:874px;top:492px;width:380px;height:146px;background:#f9f9f9;border:1px solid #a6a6a6;box-shadow:3px 3px 2px rgba(0,0,0,0.55);"></div>
<div style="left:880px;top:516px;width:368px;height:22px;background:#efefef;border-radius:5px;"></div>
<div style="left:883px;top:586px;width:362px;height:1px;background:#d4d4d4;"></div>
<span class="t" style="left:912.0px;top:497.0px;line-height:16px;letter-spacing:-0.169px;color:#1b1b1b;">Dateien aus Verzeichnissen importieren</span>
<span class="t" style="left:912.0px;top:519.0px;line-height:16px;letter-spacing:-0.139px;font-weight:bold;color:#111;">Dateien auch aus Unterverzeichnissen importieren</span>
<span class="t" style="left:912.0px;top:541.0px;line-height:16px;letter-spacing:-0.135px;color:#1b1b1b;">Verzeichnisse als ZIP-Archiv importieren</span>
<span class="t" style="left:912.0px;top:563.0px;line-height:16px;letter-spacing:-0.219px;color:#1b1b1b;">Verzeichnisse ignorieren</span>
<span class="t" style="left:912.0px;top:594.0px;line-height:16px;letter-spacing:0.197px;color:#1b1b1b;">Hilfe</span>
<span class="t" style="left:912.0px;top:616.0px;line-height:16px;letter-spacing:-0.059px;color:#1b1b1b;">Abbrechen</span>
<div style="left:0px;top:894px;width:1280px;height:26px;background:#f0f0f0;border-top:1px solid #b9b9b9;border-left:1px solid #a0a0a0;border-right:1px solid #b4b4b4;border-radius:0 0 2px 8px;"></div>
<div style="left:0px;top:908px;width:1280px;height:12px;border-bottom:2px solid #a6a6a6;border-radius:0 0 2px 8px;"></div>
<div style="left:79px;top:896px;width:3px;height:21px;background:#a9a9a9;"></div>
<div style="left:51px;top:898px;width:1px;height:17px;background:#9a9a9a;"></div>
<svg style="left:8px;top:898px;" width="11" height="15" viewBox="0 0 11 15"><path d="M6.5 0.5 L1 8 H4.6 L3 14.5 L10 5.6 H6 L8.6 0.5 Z" fill="#c4c4c4"/></svg>
<svg style="left:30px;top:898px;" width="14" height="15" viewBox="0 0 14 15"><path d="M7 0.6 L13 2.8 V7 Q13 12 7 14.4 Q1 12 1 7 V2.8 Z" fill="#b4b4b4"/><path d="M4 7.4 L6.2 9.6 L10 5.6" fill="none" stroke="#f0f0f0" stroke-width="1.6"/></svg>
<div style="left:58px;top:899px;width:14px;height:14px;background:#666;border-radius:50%;"></div>
<div style="left:64px;top:902px;width:2px;height:5px;background:#fff;"></div>
<div style="left:64px;top:908px;width:2px;height:2px;background:#fff;"></div>
<span class="t" style="left:84.0px;top:898.0px;line-height:16px;letter-spacing:-0.131px;">Auch die Dateien aus allen Unterverzeichnissen übernehmen</span>
<svg style="left:1262px;top:902px;" width="17" height="15" viewBox="0 0 17 15"><path d="M16 2 L3 15 M16 7 L8 15 M16 12 L13 15" stroke="#a8a8a8" stroke-width="1.4" fill="none"/></svg>
</body></html>
